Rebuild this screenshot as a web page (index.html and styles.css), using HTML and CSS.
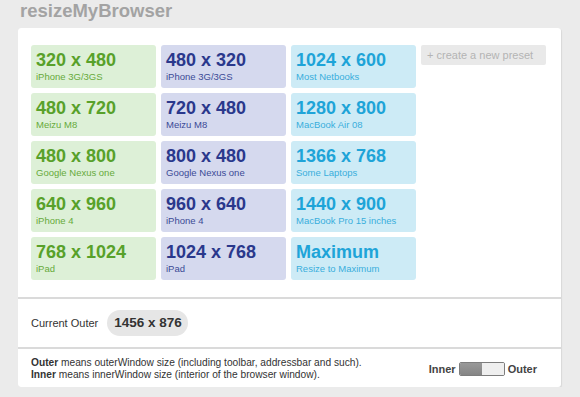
FILE: index.html
```html
<!DOCTYPE html>
<html lang="en">
<head>
  <meta charset="UTF-8" />
  <title>resizeMyBrowser</title>
  <link rel="stylesheet" href="styles.css">
</head>
<body>
  <header>
    <h1>resizeMyBrowser</h1>
  </header>

  <main class="panel">
    <div class="section presets">
      <div class="tile green"><b>320 x 480</b><span>iPhone 3G/3GS</span></div>
      <div class="tile blue"><b>480 x 320</b><span>iPhone 3G/3GS</span></div>
      <div class="tile cyan"><b>1024 x 600</b><span>Most Netbooks</span></div>
      <div class="new-preset">+ create a new preset</div>

      <div class="tile green"><b>480 x 720</b><span>Meizu M8</span></div>
      <div class="tile blue"><b>720 x 480</b><span>Meizu M8</span></div>
      <div class="tile cyan"><b>1280 x 800</b><span>MacBook Air 08</span></div>
      <div></div>

      <div class="tile green"><b>480 x 800</b><span>Google Nexus one</span></div>
      <div class="tile blue"><b>800 x 480</b><span>Google Nexus one</span></div>
      <div class="tile cyan"><b>1366 x 768</b><span>Some Laptops</span></div>
      <div></div>

      <div class="tile green"><b>640 x 960</b><span>iPhone 4</span></div>
      <div class="tile blue"><b>960 x 640</b><span>iPhone 4</span></div>
      <div class="tile cyan"><b>1440 x 900</b><span>MacBook Pro 15 inches</span></div>
      <div></div>

      <div class="tile green"><b>768 x 1024</b><span>iPad</span></div>
      <div class="tile blue"><b>1024 x 768</b><span>iPad</span></div>
      <div class="tile cyan"><b>Maximum</b><span>Resize to Maximum</span></div>
    </div>

    <div class="section current">
      <span class="current-label">Current Outer</span>
      <span class="pill">1456 x 876</span>
    </div>

    <div class="section footer">
      <p class="note">
        <b>Outer</b> means outerWindow size (including toolbar, addressbar and such).<br />
        <b>Inner</b> means innerWindow size (interior of the browser window).
      </p>
      <div class="switch">
        <b>Inner</b>
        <span class="toggle"><span class="knob-off"></span><span class="knob-on"></span></span>
        <b>Outer</b>
      </div>
    </div>
  </main>
</body>
</html>
```

FILE: styles.css
```css
body {
  margin: 0;
  background-color: #ebebeb;
  font-family: 'Liberation Sans', Arial, sans-serif;
  color: #222;
}

header {
  height: 28px;
  padding-left: 20px;
}

h1 {
  margin: 0;
  font-size: 18.5px;
  line-height: 21px;
  color: #a3a3a3;
}

.panel {
  margin-left: 18px;
  width: 543px;
  display: flex;
  flex-direction: column;
  gap: 2px;
  background-color: #dadada;
  border-radius: 3px;
  box-shadow: 1px 1px 1px rgba(0,0,0,0.08);
}

.section {
  background-color: #fff;
}

.section:first-child {
  border-radius: 3px 3px 0 0;
}

.section:last-child {
  border-radius: 0 0 3px 3px;
}

.presets {
  padding: 17px 13px;
  display: grid;
  grid-template-columns: repeat(4, 125px);
  grid-auto-rows: 43px;
  gap: 5px;
}

.tile {
  border-radius: 3px;
  padding: 5px 5px 0;
  display: flex;
  flex-direction: column;
}

.tile b {
  font-size: 18px;
  line-height: 21px;
}

.tile span {
  font-size: 9.5px;
  line-height: 11px;
}

.green { background-color: #ddf0d7; color: #58a12a; }
.green span { color: #66aa3a; }
.blue { background-color: #d5d9ee; color: #2a388c; }
.blue span { color: #3b4a96; }
.cyan { background-color: #cdebf6; color: #1ea4d8; }
.cyan span { color: #3aaedc; }

.new-preset {
  height: 20px;
  box-sizing: border-box;
  padding: 4px 6px 0;
  background-color: #e9e9e9;
  color: #b4b4b4;
  font-size: 11px;
  border-radius: 2px;
}

.current {
  padding: 11px 13px;
  display: flex;
  align-items: center;
  gap: 9px;
}

.current-label {
  font-size: 11px;
  color: #333;
}

.pill {
  height: 26px;
  line-height: 26px;
  padding: 0 6px 0 7px;
  border-radius: 13px;
  background-color: #e6e6e6;
  font-size: 13.5px;
  font-weight: bold;
  color: #333;
}

.footer {
  padding: 8px 24px 6px 13px;
  display: flex;
  align-items: center;
  justify-content: space-between;
}

.note {
  margin: 0;
  font-size: 10.2px;
  line-height: 12px;
  color: #333;
}

.switch {
  display: flex;
  align-items: center;
  gap: 3px;
  font-size: 11px;
  color: #444;
}

.toggle {
  display: flex;
  width: 46px;
  height: 14px;
  box-sizing: border-box;
  border: 1px solid #7d7d7d;
  border-radius: 2px;
  overflow: hidden;
}

.knob-off {
  flex: 1;
  background: linear-gradient(#999, #858585);
}

.knob-on {
  flex: 1;
  background-color: #efefef;
}
```
